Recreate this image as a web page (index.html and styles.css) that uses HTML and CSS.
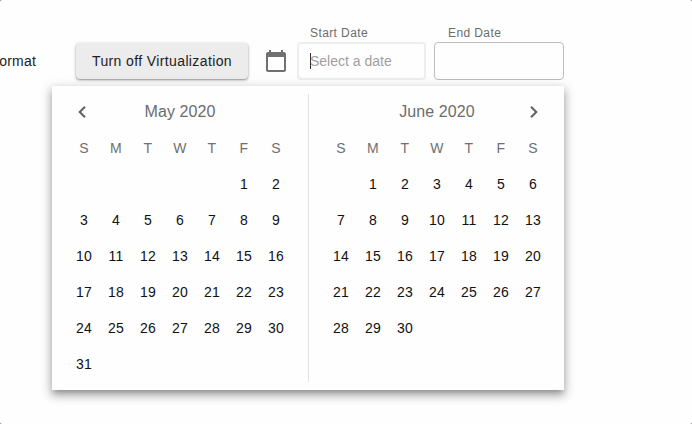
FILE: index.html
```html
<!DOCTYPE html>
<html lang="en">
<head>
<meta charset="utf-8">
<title>Date range</title>
<link rel="stylesheet" href="styles.css">
</head>
<body>
<div class="page">
  <div class="toolbar">
    <div class="format"><span>ormat</span></div>
    <button class="toggle">Turn off Virtualization</button>
    <svg class="cal-icon" viewBox="0 0 20 22"><path fill="#707070" d="M18 2h-1V0h-2v2H5V0H3v2H2C.9 2 0 2.900 0 4v16c0 1.100.9 2 2 2h16c1.100 0 2-.9 2-2V4c0-1.100-.9-2-2-2zm0 18H2V7h16v13z"/></svg>
    <div class="field start">
      <label>Start Date</label>
      <div class="input active"><i class="caret"></i><span>Select a date</span></div>
    </div>
    <div class="field end">
      <label>End Date</label>
      <div class="input"></div>
    </div>
  </div>
  <div class="picker">
    <section class="month">
      <header><svg class="arrow prev" viewBox="0 0 8 12"><path d="M7 .700 1.700 6 7 11.300"/></svg><h2>May 2020</h2></header>
      <div class="days names"><span>S</span><span>M</span><span>T</span><span>W</span><span>T</span><span>F</span><span>S</span></div>
      <div class="days may"><span>1</span><span>2</span><span>3</span><span>4</span><span>5</span><span>6</span><span>7</span><span>8</span><span>9</span><span>10</span><span>11</span><span>12</span><span>13</span><span>14</span><span>15</span><span>16</span><span>17</span><span>18</span><span>19</span><span>20</span><span>21</span><span>22</span><span>23</span><span>24</span><span>25</span><span>26</span><span>27</span><span>28</span><span>29</span><span>30</span><span>31</span></div>
    </section>
    <div class="divider"></div>
    <section class="month">
      <header><h2>June 2020</h2><svg class="arrow next" viewBox="0 0 8 12"><path d="M1 .700 6.300 6 1 11.300"/></svg></header>
      <div class="days names"><span>S</span><span>M</span><span>T</span><span>W</span><span>T</span><span>F</span><span>S</span></div>
      <div class="days june"><span>1</span><span>2</span><span>3</span><span>4</span><span>5</span><span>6</span><span>7</span><span>8</span><span>9</span><span>10</span><span>11</span><span>12</span><span>13</span><span>14</span><span>15</span><span>16</span><span>17</span><span>18</span><span>19</span><span>20</span><span>21</span><span>22</span><span>23</span><span>24</span><span>25</span><span>26</span><span>27</span><span>28</span><span>29</span><span>30</span></div>
    </section>
  </div>
</div>
</body>
</html>
```
FILE: styles.css
```css
* { box-sizing: border-box; }
html { background: #777; }
body { margin: 0; font-family: "Liberation Sans", Arial, sans-serif; font-size: 14px; color: #212121; }
.page { height: 424px; background: #fefefe; border-radius: 2px; overflow: hidden; }
.toolbar { display: flex; align-items: flex-end; height: 80px; }
.format { display: flex; justify-content: flex-end; width: 36px; height: 37px; margin-right: 40px; line-height: 36px; letter-spacing: .2px; }
.toggle { width: 172px; height: 36px; margin: 0 18px 1px 0; padding: 0; border: 0; border-radius: 4px; background: #ececec; color: #212121; font: 14px "Liberation Sans", Arial, sans-serif; letter-spacing: .38px; white-space: nowrap; box-shadow: 0 1px 2px rgba(0,0,0,.35), 0 1px 4px rgba(0,0,0,.14); }
.cal-icon { width: 20px; height: 22px; margin: 0 11px 8px 0; }
.field label { display: block; margin: 0 0 2px 13px; font-size: 12px; line-height: 14px; letter-spacing: .4px; color: #6c6c6c; }
.start { width: 129px; margin-right: 8px; }
.end { width: 130px; }
.end label { margin-left: 14px; }
.input { position: relative; display: flex; align-items: center; height: 38px; padding-left: 11px; border: 1px solid #bdbdbd; border-radius: 4px; color: #9e9e9e; }
.active { border: 2px solid #eee; }
.caret { position: absolute; left: 11px; top: 9px; width: 1px; height: 16px; background: #333; }
.picker { position: relative; display: flex; width: 512px; height: 304px; margin: 6px 0 0 52px; padding: 8px 0; background: #fefefe; box-shadow: 0 5px 5px -3px rgba(0,0,0,.2), 0 5px 8px 1px rgba(0,0,0,.22), 0 3px 12px 2px rgba(0,0,0,.12); }
.month { flex: none; width: 256px; padding: 0 16px; }
.month header { display: flex; align-items: center; height: 36px; }
.month h2 { flex: 1; margin: 0; font-size: 16px; font-weight: 400; line-height: 36px; text-align: center; letter-spacing: .1px; color: #6c6c6c; }
.arrow { width: 8px; height: 12px; fill: none; stroke: #616161; stroke-width: 2; }
.prev { margin: 0 -18px 0 10px; }
.next { margin: 0 11px 0 -19px; }
.divider { flex: none; width: 1px; background: #e0e0e0; }
.days { display: grid; grid-template-columns: repeat(7, 32px); grid-auto-rows: 36px; line-height: 36px; text-align: center; color: #111; letter-spacing: .2px; }
.names { color: #707070; }
.may span:first-child { grid-column-start: 6; }
.june span:first-child { grid-column-start: 2; }
```
